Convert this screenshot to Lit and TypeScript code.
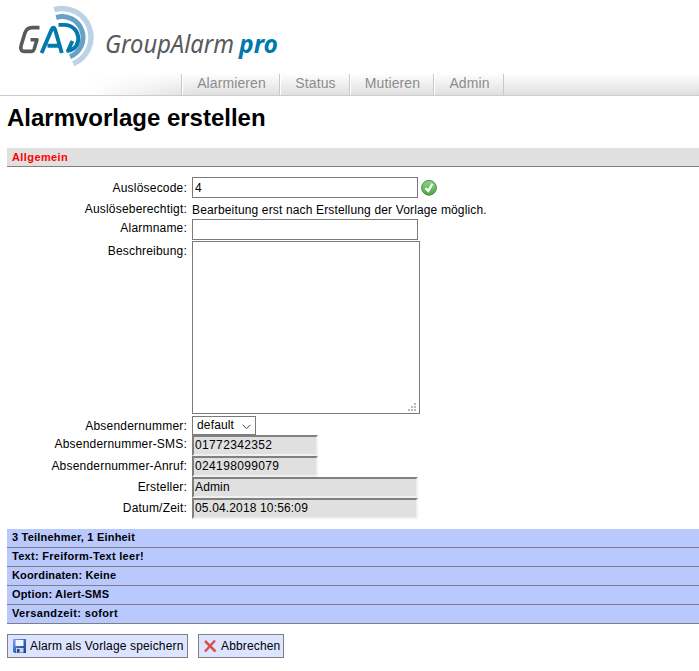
import { LitElement, html, css, svg } from "lit";
import { customElement } from "lit/decorators.js";

const LOGO = svg`
  <g fill="none" stroke-linejoin="round">
    <path d="M54.2 9.7A28.66 28.66 0 0 1 73.2 63.7" stroke="#bcd3e6" stroke-width="5.4"/>
    <path d="M56.2 17.6A20.7 20.7 0 0 1 70 56.6" stroke="#66a1c6" stroke-width="5"/>
    <path d="M58.5 24.9H64.5C81.5 25.5 83 48.5 68 50.8L72.4 41" stroke="#0079ab" stroke-width="3.9"/>
    <path d="M39.5 27.6H32C27.5 27.6 26 29.6 24.9 33L21.4 44.5C20 49 21 51.4 24.5 51.4H31.5C33 51.4 33.7 50.5 34.2 49L37 39.7H30.5" stroke="#58595b" stroke-width="3.6"/>
    <path d="M41.6 53L51.4 30Q53.4 25.6 55.2 30L61.8 53M47.5 45.8H59" stroke="#0079ab" stroke-width="3.9"/>
  </g>`;

@customElement("app-root")
export class AppRoot extends LitElement {
  static styles = css`
    :host { display: block; height: 671px; overflow: hidden; background: #fff; color: #000;
      font: 12px/15px "Liberation Sans", Arial, sans-serif; letter-spacing: 0.15px; }
    * { box-sizing: border-box; }
    .header { position: relative; height: 96px; border-bottom: 1px solid #ccc; display: flex; align-items: flex-end; }
    .shade { position: absolute; left: 88px; right: 0; top: 73px; height: 22px;
      background: linear-gradient(to right, #fff, rgba(255,255,255,0) 110px), linear-gradient(#fff, #dfdfdf); }
    .brand { position: absolute; left: 0; top: 0; }
    .word { font: italic 25px "Noto Sans", sans-serif; letter-spacing: 0; fill: #58595b; }
    .pro { font-weight: 700; fill: #0079ab; }
    .nav { position: relative; display: flex; margin-left: 181px; height: 21px; border-left: 1px solid #c8c8c8; }
    .tab { border-right: 1px solid #c8c8c8; box-shadow: inset 1px 0 #fff; text-align: center; color: #8c8c8c;
      font-size: 14px; line-height: 18px; padding-left: 2px; letter-spacing: 0.1px; }
    h1 { margin: 8px 0 0 7px; font-size: 24px; line-height: 28px; height: 44px; letter-spacing: -0.01px; }
    .section { margin-left: 7px; height: 19px; padding-left: 5px; border-bottom: 1px solid #808080; background: #e0e0e0;
      color: #f00; font-weight: 700; font-size: 11px; line-height: 19px; letter-spacing: 0.4px; }
    .form { margin-top: 10px; }
    .row { display: grid; grid-template-columns: 187px 1fr; column-gap: 5px; }
    .label { text-align: right; white-space: nowrap; letter-spacing: 0.2px; }
    .value { display: flex; align-items: flex-start; white-space: nowrap; }
    .note { line-height: 24px; }
    .box { border: 1px solid #7a7a7a; padding-left: 2px; height: 21px; line-height: 20px; width: 226px; background: #fff; }
    .area { position: relative; width: 228px; height: 173px; }
    .grip { position: absolute; right: 3px; bottom: 2px; }
    .select { width: 64px; height: 19px; padding: 0 4px; line-height: 17px; display: flex; justify-content: space-between; }
    .chev { margin-top: 7px; }
    .ro { border: 2px solid #808080; border-right-color: #f0f0f0; border-bottom-color: #f0f0f0; padding-left: 1px;
      background: #e0e0e0; line-height: 17px; }
    .short { width: 126px; letter-spacing: 0.36px; }
    .ok { margin: 2px 0 0 3px; }
    .bars { margin: 10px 0 0 7px; }
    .bar { height: 19px; border-bottom: 1px solid #808080; background: #b9c9fe; padding-left: 5px;
      font-weight: 700; font-size: 11px; line-height: 17px; }
    .buttons { display: flex; gap: 10px; margin: 10px 0 0 7px; }
    .btn { display: flex; align-items: center; height: 24px; border: 1px solid #808080; background: #dde4ff; padding: 0 0 0 4px;
      white-space: nowrap; gap: 3px; line-height: 24px; }
    .save { width: 181px; }
    .cancel { width: 86px; }
  `;

  private tab(text: string, width: number) {
    return html`<div class="tab" style="width:${width}px">${text}</div>`;
  }

  private row(label: string, height: number, lineHeight: number, value: unknown) {
    return html`<div class="row" style="height:${height}px">
      <div class="label" style="line-height:${lineHeight}px">${label}</div>
      <div class="value">${value}</div>
    </div>`;
  }

  private bar(text: string, spacing: number) {
    return html`<div class="bar" style="letter-spacing:${spacing}px">${text}</div>`;
  }

  render() {
    return html`
      <div class="header">
        <div class="shade"></div>
        <svg class="brand" width="300" height="72">${LOGO}
          <text class="word" x="105" y="53" textLength="129" lengthAdjust="spacingAndGlyphs">GroupAlarm</text>
          <text class="word pro" x="239" y="53" textLength="39" lengthAdjust="spacingAndGlyphs">pro</text>
        </svg>
        <div class="nav">
          ${this.tab("Alarmieren", 98)}${this.tab("Status", 70)}${this.tab("Mutieren", 84)}${this.tab("Admin", 70)}
        </div>
      </div>
      <h1>Alarmvorlage erstellen</h1>
      <div class="section">Allgemein</div>
      <div class="form">
        ${this.row("Auslösecode:", 21, 22, html`<div class="box">4</div>
          <svg class="ok" width="17" height="17" viewBox="0 0 17 17">
            <defs><linearGradient id="g" x2="0" y2="1"><stop stop-color="#8ad982"/><stop offset="1" stop-color="#43ab3c"/></linearGradient></defs>
            <circle cx="8" cy="8.8" r="7.4" fill="url(#g)" stroke="#5f7f5d"/>
            <path d="M4.4 9.2L7.3 12L11.4 4.8" fill="none" stroke="#fff" stroke-width="2.3"/>
          </svg>`)}
        ${this.row("Auslöseberechtigt:", 21, 22, html`<div class="note">Bearbeitung erst nach Erstellung der Vorlage möglich.</div>`)}
        ${this.row("Alarmname:", 22, 19, html`<div class="box"></div>`)}
        ${this.row("Beschreibung:", 175, 20, html`<div class="box area">
          <svg class="grip" width="8" height="8" fill="#b8b8b8" shape-rendering="crispEdges"><path d="M6 0h2v2H6zM3 3h2v2H3zM6 3h2v2H6zM0 6h2v2H0zM3 6h2v2H3zM6 6h2v2H6z"/></svg>
        </div>`)}
        ${this.row("Absendernummer:", 19, 20, html`<div class="box select">default
          <svg class="chev" width="9" height="6" fill="none" stroke="#444"><path d="M.5 .7L4.5 4.7L8.5 .7"/></svg></div>`)}
        ${this.row("Absendernummer-SMS:", 21, 19, html`<div class="box ro short">01772342352</div>`)}
        ${this.row("Absendernummer-Anruf:", 21, 20, html`<div class="box ro short">024198099079</div>`)}
        ${this.row("Ersteller:", 21, 20, html`<div class="box ro">Admin</div>`)}
        ${this.row("Datum/Zeit:", 21, 20, html`<div class="box ro">05.04.2018 10:56:09</div>`)}
      </div>
      <div class="bars">
        ${this.bar("3 Teilnehmer, 1 Einheit", 0.2)}
        ${this.bar("Text: Freiform-Text leer!", 0.28)}
        ${this.bar("Koordinaten: Keine", 0.15)}
        ${this.bar("Option: Alert-SMS", 0.17)}
        ${this.bar("Versandzeit: sofort", 0.37)}
      </div>
      <div class="buttons">
        <div class="btn save">
          <svg width="15" height="14" viewBox="0 0 15 14">
            <defs><linearGradient id="d" x2="1" y2="1"><stop stop-color="#7fa6ee"/><stop offset=".5" stop-color="#3467c8"/><stop offset="1" stop-color="#1c3f8c"/></linearGradient></defs>
            <path d="M1 0h13v14H2.500L1 12.500z" fill="url(#d)"/>
            <path d="M3.500 1h8v6h-8z" fill="#f1f5fd"/>
            <path d="M4 9h7.500v4.500H4z" fill="#cdd5e2"/>
            <path d="M5 10h2.500v3.500H5z" fill="#27457f"/>
          </svg>
          <span>Alarm als Vorlage speichern</span>
        </div>
        <div class="btn cancel">
          <svg width="15" height="14" viewBox="0 0 15 14"><path d="M2 2L12.500 12.500M12 1.500L2 12.500" stroke="#d3554a" stroke-width="2.500"/></svg>
          <span>Abbrechen</span>
        </div>
      </div>`;
  }
}
